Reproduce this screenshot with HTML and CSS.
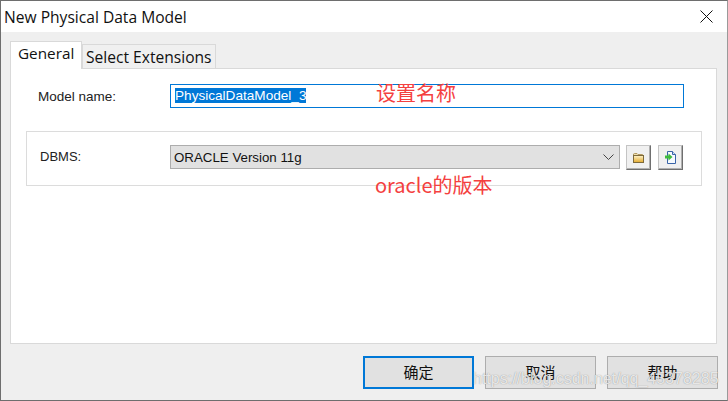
FILE: index.html
```html
<!DOCTYPE html>
<html lang="en">
<head>
    <meta charset="UTF-8">
    <title>New Physical Data Model</title>
    <link rel="stylesheet" href="styles.css">
</head>
<body>

<div class="window">
    <div class="titlebar">
        <span class="title">New Physical Data Model</span>
        <svg class="close" width="13" height="13" viewBox="0 0 13 13">
            <path d="M0.5 0.5L12.5 12.5M12.5 0.5L0.5 12.5" stroke="#111" stroke-width="1" fill="none"/>
        </svg>
    </div>

    <div class="content">
        <!-- Tabs -->
        <div class="tabs">
            <div class="tab active">General</div>
            <div class="tab">Select Extensions</div>
        </div>

        <div class="panel">
            <div class="name-row">
                <label class="field-label">Model name:</label>
                <div class="name-input"><span class="selected">PhysicalDataModel_3</span></div>
            </div>

            <div class="group">
                <label class="group-label">DBMS:</label>
                <div class="select">
                    <span>ORACLE Version 11g</span>
                    <svg width="11" height="6" viewBox="0 0 11 6">
                        <path d="M0.5 0.5L5.5 5.5L10.5 0.5" stroke="#444" stroke-width="1" fill="none"/>
                    </svg>
                </div>
                <button class="icon-btn">
                    <svg width="11" height="10" viewBox="0 0 11 10">
                        <defs>
                            <linearGradient id="folderFill" x1="0" y1="0" x2="0" y2="1">
                                <stop offset="0" stop-color="#fff4cc"/>
                                <stop offset="1" stop-color="#e2a92c"/>
                            </linearGradient>
                        </defs>
                        <path d="M0.5 2V1L1.5 0.5H4L5 1.5H9.5V2.5H0.5Z" fill="#efe0b0" stroke="#b39a62" stroke-width="1"/>
                        <rect x="0.5" y="2.5" width="10" height="7" fill="url(#folderFill)" stroke="#7d6a3c" stroke-width="1"/>
                    </svg>
                </button>
                <button class="icon-btn">
                    <svg width="11" height="13" viewBox="0 0 11 13">
                        <path d="M2.5 0.5H7.5L10.5 3.5V12.5H2.5Z" fill="#f6fafe" stroke="#3a64a8" stroke-width="1"/>
                        <path d="M7.5 0.5V3.5H10.5" fill="#cfe0f5" stroke="#3a64a8" stroke-width="1"/>
                        <path d="M0 4.5H3.5V2.5L7.5 6L3.5 9.5V7.5H0Z" fill="#3dbb3d"/>
                    </svg>
                </button>
            </div>

            <div class="note note-name">设置名称</div>
            <div class="note note-version">oracle的版本</div>
        </div>

        <div class="footer">
            <button class="btn default">确定</button>
            <button class="btn">取消</button>
            <button class="btn">帮助</button>
        </div>
    </div>

    <div class="watermark">https://blog.csdn.net/qq_45378285</div>
</div>

</body>
</html>
```

FILE: styles.css
```css
body {
    margin: 0;
    font-family: "Liberation Sans", Arial, sans-serif;
    background-color: #fff;
}

.window {
    position: relative;
    box-sizing: border-box;
    width: 728px;
    height: 401px;
    display: flex;
    flex-direction: column;
    overflow: hidden;
    border: 1px solid #6e6e6e;
    border-right-color: #9a9a9a;
    background-color: #efefef;
}

.titlebar {
    height: 31px;
    flex: none;
    display: flex;
    align-items: center;
    justify-content: space-between;
    padding: 0 14px 0 3px;
    background-color: #fff;
}

.title {
    font-family: "Open Sans", sans-serif;
    font-size: 15.6px;
    color: #111;
}

.content {
    flex: 1;
    display: flex;
    flex-direction: column;
    padding: 10px 10px 0 9px;
}

.tabs {
    display: flex;
    align-items: flex-end;
    height: 27px;
    flex: none;
    margin-bottom: -1px;
    position: relative;
}

.tab {
    box-sizing: border-box;
    height: 25px;
    width: 134px;
    padding-left: 3px;
    border: 1px solid #d9d9d9;
    background-color: #f0f0f0;
    font-family: "Open Sans", sans-serif;
    font-size: 15.6px;
    line-height: 24px;
    color: #111;
}

.tab.active {
    height: 28px;
    width: 72px;
    padding-left: 7px;
    border-bottom: none;
    background-color: #fff;
    font-size: 15.3px;
    line-height: 23px;
    position: relative;
    z-index: 1;
}

.panel {
    position: relative;
    box-sizing: border-box;
    height: 276px;
    flex: none;
    border: 1px solid #d9d9d9;
    background-color: #fff;
    padding: 15px 14px 0 15px;
}

.name-row {
    display: flex;
    align-items: center;
    height: 24px;
    padding-left: 12px;
}

.field-label {
    width: 132px;
    font-size: 13.5px;
    color: #222;
}

.name-input {
    box-sizing: border-box;
    width: 514px;
    height: 24px;
    border: 1px solid #0078d7;
    padding: 3px 4px;
    font-size: 13.6px;
    line-height: 16px;
}

.selected {
    background-color: #0078d7;
    color: #fff;
}

.group {
    box-sizing: border-box;
    width: 676px;
    height: 55px;
    margin-top: 23px;
    display: flex;
    align-items: flex-start;
    padding: 13px 0 0 13px;
    border: 1px solid #dcdcdc;
}

.group-label {
    width: 130px;
    font-size: 13px;
    line-height: 24px;
    color: #222;
}

.select {
    box-sizing: border-box;
    width: 450px;
    height: 24px;
    display: flex;
    align-items: center;
    justify-content: space-between;
    padding: 0 5px 0 3px;
    border: 1px solid #adadad;
    background-color: #e1e1e1;
    font-size: 13.3px;
    color: #111;
}

.icon-btn {
    box-sizing: border-box;
    width: 25px;
    height: 25px;
    padding: 0;
    margin-left: 6px;
    display: flex;
    align-items: center;
    justify-content: center;
    background-color: #f0f0f0;
    border: 1px solid;
    border-color: #c4c4c4 #6f6f6f #6f6f6f #c4c4c4;
    box-shadow: inset -1px -1px 0 #b0b0b0;
}

.icon-btn + .icon-btn {
    margin-left: 7px;
}

.note {
    position: absolute;
    font-family: "Noto Sans CJK SC", sans-serif;
    font-size: 20px;
    line-height: 24px;
    color: #f44040;
}

.note-name {
    left: 365px;
    top: 12px;
}

.note-version {
    left: 364px;
    top: 104px;
}

.footer {
    display: flex;
    justify-content: flex-end;
    gap: 11px;
    margin-top: 12px;
    margin-right: -1px;
}

.btn {
    box-sizing: border-box;
    width: 111px;
    height: 33px;
    padding: 0 0 2px;
    border: 1px solid #adadad;
    background-color: #e1e1e1;
    font-family: "Noto Sans CJK SC", sans-serif;
    font-size: 15px;
    color: #111;
}

.btn.default {
    border: 2px solid #0078d7;
}

.watermark {
    position: absolute;
    left: 472px;
    top: 367px;
    font-size: 16px;
    line-height: 22px;
    color: rgba(255, 255, 255, 0.8);
    text-shadow: 0 0 1px rgba(90, 90, 90, 0.7);
    white-space: nowrap;
}
```
